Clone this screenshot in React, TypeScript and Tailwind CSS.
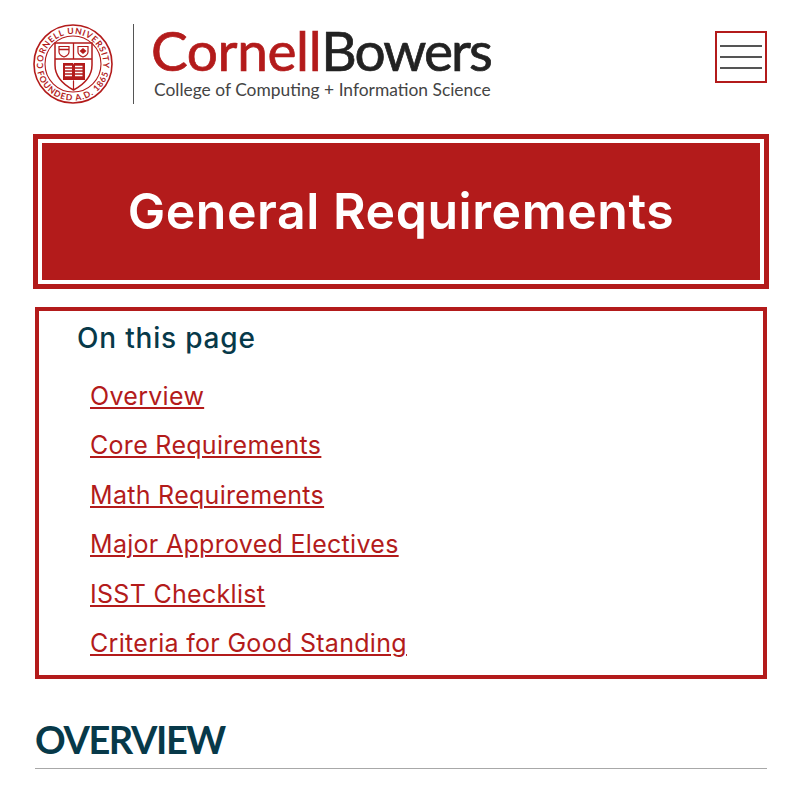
const RED = "#b31b1b";

function Seal() {
  return (
    <svg width="82" height="82" viewBox="0 0 82 82" className="shrink-0" fill="none">
      <defs>
        <path id="sealTop" d="M 41 71 a 30 30 0 1 1 0.01 0" />
        <path id="sealBottom" d="M 41 4.4 a 36.6 36.6 0 1 0 0.01 0" />
      </defs>
      <circle cx="41" cy="41" r="39" stroke={RED} strokeWidth="1.6" />
      <circle cx="41" cy="41" r="28" stroke={RED} strokeWidth="1.1" />
      <text fontFamily="Lato, sans-serif" fontSize="8.6" fontWeight="700" fill={RED} letterSpacing="0.7">
        <textPath href="#sealTop" startOffset="50%" textAnchor="middle">CORNELL UNIVERSITY</textPath>
      </text>
      <text fontFamily="Lato, sans-serif" fontSize="8.6" fontWeight="700" fill={RED} letterSpacing="0.9">
        <textPath href="#sealBottom" startOffset="50%" textAnchor="middle">FOUNDED A.D. 1865</textPath>
      </text>
      <path d="M23 20H60V42C60 54 51 62 41.5 67C32 62 23 54 23 42Z" stroke={RED} strokeWidth="1.5" fill="#fff" />
      <path d="M23 36H60M41.5 20V36" stroke={RED} strokeWidth="1.3" />
      <path d="M27 23.5H37V29C37 31.5 34.5 33 32 34C29.5 33 27 31.5 27 29Z" stroke={RED} strokeWidth="1.2" />
      <path d="M27 26.5H37" stroke={RED} strokeWidth="1.5" />
      <path d="M46 23.5H56V29C56 31.5 53.5 33 51 34C48.5 33 46 31.5 46 29Z" stroke={RED} strokeWidth="1.2" />
      <path d="M47.5 28L51 25L54.5 28L51 31Z" fill={RED} />
      <path d="M31 40H41L41.5 41.5L42 40H53V57H42L41.5 58.5L41 57H31Z" fill={RED} />
      <path d="M33 43.5H40M33 46.5H40M33 49.5H40M33 52.5H40M43 43.5H50.5M43 46.5H50.5M43 49.5H50.5M43 52.5H50.5" stroke="#fff" strokeWidth="1.3" />
      <path d="M41.5 58V66" stroke={RED} strokeWidth="1.2" />
    </svg>
  );
}

function Logo() {
  return (
    <div className="flex items-center">
      <Seal />
      <div className="ml-[19px] mr-[18px] h-[80px] w-px bg-[#555555]" />
      <div className="mb-[5px] flex flex-col">
        <div className="-ml-[1px] h-[52px] whitespace-nowrap font-['Lato',sans-serif] text-[55px] leading-[52px] [-webkit-text-stroke:0.7px_currentColor]">
          <span className="tracking-[-0.4px] text-[#b31b1b]">Cornell</span>
          <span className="tracking-[-2px] text-[#222222]">Bowers</span>
        </div>
        <div className="ml-[2px] mt-[4px] whitespace-nowrap font-['Lato',sans-serif] text-[17.4px] leading-[20px] text-[#444444]">
          College of Computing + Information Science
        </div>
      </div>
    </div>
  );
}

const links = [
  "Overview",
  "Core Requirements",
  "Math Requirements",
  "Major Approved Electives",
  "ISST Checklist",
  "Criteria for Good Standing",
];

export default function App() {
  return (
    <div className="h-[791px] w-[800px] overflow-hidden bg-white font-['Inter',sans-serif]">
      <header className="flex h-[134px] items-start justify-between pl-[32px] pr-[33px] pt-[23px]">
        <Logo />
        <button className="mt-[8px] flex h-[52px] w-[52px] flex-col items-center justify-center gap-[9px] border-2 border-[#b31b1b] bg-white">
          <span className="block h-[2px] w-[42px] bg-[#555555]" />
          <span className="block h-[2px] w-[42px] bg-[#555555]" />
          <span className="block h-[2px] w-[42px] bg-[#555555]" />
        </button>
      </header>

      <main className="px-[33px]">
        <div className="w-[736px] border-[5px] border-[#b31b1b] p-[4px]">
          <h1 className="flex h-[137px] items-center justify-center bg-[#b31b1b] text-[50px] font-semibold tracking-[0.55px] text-white">
            General Requirements
          </h1>
        </div>

        <nav className="mx-[2px] mt-[18px] h-[372px] w-[732px] border-4 border-[#b31b1b] pl-[38px] pt-[9px]">
          <h2 className="text-[28px] font-medium leading-[36px] tracking-[0.8px] text-[#073949]">On this page</h2>
          <ul className="mt-[23px] flex flex-col gap-[15.4px] pl-[13px]">
            {links.map((l) => (
              <li key={l} className="h-[34px] text-[25px] leading-[34px] tracking-[0.3px]">
                <a href="#" className="text-[#b31b1b] underline decoration-[1.5px] underline-offset-[2px]">{l}</a>
              </li>
            ))}
          </ul>
        </nav>

        <section className="mx-[2px] mt-[35px] w-[732px] border-b border-[#a8a8a8] pb-[4px]">
          <h2 className="font-['Lato',sans-serif] text-[38px] font-bold leading-[50px] tracking-[-1.4px] text-[#073949]">OVERVIEW</h2>
        </section>
      </main>
    </div>
  );
}
